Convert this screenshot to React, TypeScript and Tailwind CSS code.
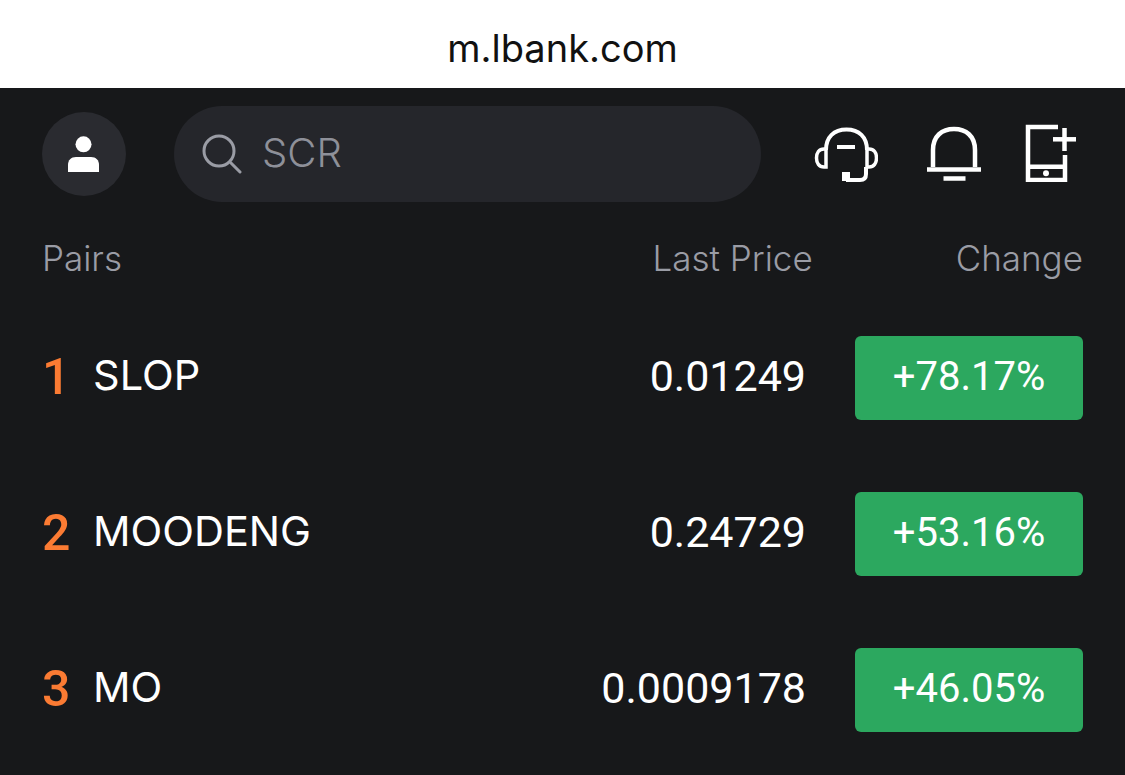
const rows = [
  { rank: '1', pair: 'SLOP', price: '0.01249', change: '+78.17%' },
  { rank: '2', pair: 'MOODENG', price: '0.24729', change: '+53.16%' },
  { rank: '3', pair: 'MO', price: '0.0009178', change: '+46.05%' },
];

export default function App() {
  return (
    <div className="h-[775px] w-[1125px] overflow-hidden bg-[#17181a] font-['Inter',sans-serif]">
      {/* browser address bar */}
      <div className="flex h-[88px] items-center justify-center bg-white pt-[8px] text-[38px] text-[#111]">
        m.lbank.com
      </div>

      {/* header */}
      <div className="flex h-[114px] items-center pl-[42px] pt-[18px]">
        <div className="flex h-[84px] w-[84px] items-center justify-center rounded-full bg-[#2a2b30]">
          <svg width="34" height="36" viewBox="0 0 34 36" fill="#fff">
            <circle cx="16.500" cy="8.300" r="8" />
            <path d="M1 36v-7c0-5 3-8 8-8h15c5 0 8 3 8 8v7z" />
          </svg>
        </div>
        <div className="ml-[48px] flex h-[96px] w-[587px] items-center rounded-[48px] bg-[#25262b] pl-[28px]">
          <svg width="40" height="42" viewBox="0 0 40 42" fill="none" stroke="#9a9ca5" strokeWidth="3" strokeLinecap="round">
            <circle cx="17" cy="18" r="15" />
            <path d="M29 30l9 9" />
          </svg>
          <span className="ml-[20px] pb-[2px] text-[40px] font-light leading-none text-[#8e9099]">SCR</span>
        </div>
        <div className="ml-[53px] pt-[2px]">
          <svg width="64" height="56" viewBox="0 0 64 56" fill="none" stroke="#fff" strokeWidth="4">
            <path d="M12 23C12 10 20 2.500 32.500 2.500S53 10 53 23" />
            <path d="M12 22H10C5 22 2.500 26 2.500 31s2.500 9 7.500 9h2z" strokeWidth="3.500" />
            <path d="M53 22h2c5 0 7.500 4 7.500 9s-2.500 9-7.500 9h-2z" strokeWidth="3.500" />
            <path d="M23 20h18" />
            <path d="M52 40v7c0 4-2 6-6 6H32" />
            <path d="M28 45h8v9h-8z" fill="#fff" stroke="none" />
          </svg>
        </div>
        <div className="ml-[48px]">
          <svg width="56" height="56" viewBox="0 0 56 56" fill="none" stroke="#fff" strokeWidth="4.500">
            <path d="M7 41V24C7 10 16 3 28 3s21 7 21 21v17" />
            <path d="M1 43.500h54" />
            <path d="M17.500 52.500h22" />
          </svg>
        </div>
        <div className="ml-[43px] pb-[2px]">
          <svg width="52" height="58" viewBox="0 0 52 58" fill="none" stroke="#fff" strokeWidth="4.500">
            <path d="M33 3H3v53h37V31" />
            <path d="M3 42.700h37" />
            <path d="M28 15.300h23" />
            <path d="M39.500 4v23" />
            <circle cx="21" cy="49.300" r="3" fill="#fff" stroke="none" />
          </svg>
        </div>
      </div>

      {/* column titles */}
      <div className="mt-[32px] flex items-center px-[42px] text-[35px] font-light leading-[48px] text-[#9a9ca5]">
        <span>Pairs</span>
        <span className="ml-auto">Last Price</span>
        <span className="ml-[143px]">Change</span>
      </div>

      {/* rows */}
      <div className="mt-[54px] flex flex-col gap-[72px] px-[42px]">
        {rows.map((row) => (
          <div key={row.rank} className="flex h-[84px] items-center">
            <span className="w-[51px] pb-[2px] font-['Roboto',sans-serif] text-[50px] font-medium leading-none text-[#fb7b33]">{row.rank}</span>
            <span className="pb-[4px] text-[41.500px] leading-none text-white">{row.pair}</span>
            <span className="ml-auto pb-[4px] font-['Roboto',sans-serif] text-[43px] leading-none text-white">{row.price}</span>
            <div className="ml-[49px] flex h-[84px] w-[228px] items-center justify-center rounded-[6px] bg-[#2ca85f] pb-[2px] font-['Roboto',sans-serif] text-[40px] text-white">
              {row.change}
            </div>
          </div>
        ))}
      </div>
    </div>
  );
}
